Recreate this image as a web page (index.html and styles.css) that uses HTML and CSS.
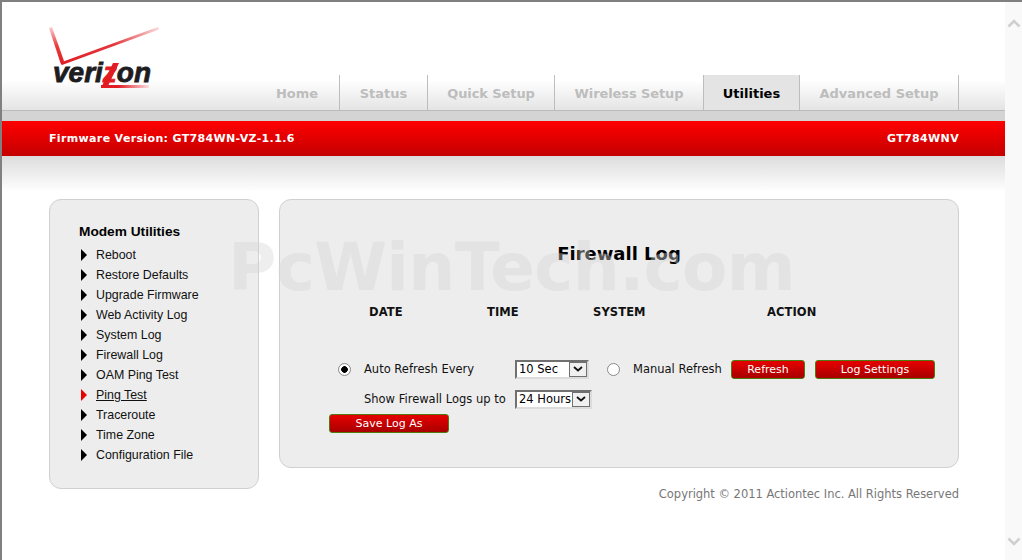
FILE: index.html
```html
<!DOCTYPE html>
<html lang="en">
<head>
    <meta charset="UTF-8">
    <title>Firewall Log</title>
    <link rel="stylesheet" href="styles.css">
</head>
<body>
<div id="wrap">
    <div id="main">
        <div id="head">
            <div class="logo">
                <svg width="112" height="70" viewBox="0 0 112 70">
                    <defs>
                        <linearGradient id="checkL" x1="0" y1="0" x2="0" y2="1">
                            <stop offset="0" stop-color="#f8d0d0"/>
                            <stop offset="0.5" stop-color="#ea3a3a"/>
                            <stop offset="1" stop-color="#e11c24"/>
                        </linearGradient>
                        <linearGradient id="checkR" x1="0" y1="0" x2="1" y2="0">
                            <stop offset="0" stop-color="#e11c24"/>
                            <stop offset="0.55" stop-color="#e4383e"/>
                            <stop offset="1" stop-color="#fadada"/>
                        </linearGradient>
                        <linearGradient id="bar" x1="0" y1="0" x2="1" y2="0">
                            <stop offset="0" stop-color="#e11c24"/>
                            <stop offset="0.35" stop-color="#e11c24"/>
                            <stop offset="1" stop-color="#fbdede"/>
                        </linearGradient>
                    </defs>
                    <polygon points="0,1 3,0 15,34 13,38 11.5,36" fill="url(#checkL)"/>
                    <polygon points="11.5,35.5 109,0 110,2.5 13,38" fill="url(#checkR)"/>
                    <text x="4" y="55" class="logo-text" textLength="98" lengthAdjust="spacingAndGlyphs">veri<tspan class="logo-z">z</tspan>on</text>
                    <polygon points="52,58 100,58 100,61 52,61" fill="url(#bar)"/>
                    <polygon points="52,61 58,61 70,36 64,36" fill="#e11c24"/>
                </svg>
            </div>
            <ul id="tabs">
                <li class="t1">Home</li>
                <li class="t2">Status</li>
                <li class="t3">Quick Setup</li>
                <li class="t4">Wireless Setup</li>
                <li class="t5 current">Utilities</li>
                <li class="t6">Advanced Setup</li>
            </ul>
        </div>
        <div id="redbar">
            <span>Firmware Version: GT784WN-VZ-1.1.6</span>
            <span>GT784WNV</span>
        </div>
        <div id="shade"></div>
        <div id="content">
            <div id="side">
                <h3>Modem Utilities</h3>
                <ul>
                    <li>Reboot</li>
                    <li>Restore Defaults</li>
                    <li>Upgrade Firmware</li>
                    <li>Web Activity Log</li>
                    <li>System Log</li>
                    <li>Firewall Log</li>
                    <li>OAM Ping Test</li>
                    <li class="on">Ping Test</li>
                    <li>Traceroute</li>
                    <li>Time Zone</li>
                    <li>Configuration File</li>
                </ul>
            </div>
            <div id="right">
                <div id="panel">
                    <h2>Firewall Log</h2>
                    <div class="cols">
                        <span>DATE</span>
                        <span>TIME</span>
                        <span>SYSTEM</span>
                        <span>ACTION</span>
                    </div>
                    <div class="row row1">
                        <input type="radio" name="mode" class="radio" checked>
                        <label class="lab1">Auto Refresh Every</label>
                        <div class="sel sel1">10 Sec<i><svg width="10" height="6" viewBox="0 0 10 6"><path d="M1 1 L5 4.5 L9 1" fill="none" stroke="#111" stroke-width="1.8"/></svg></i></div>
                        <input type="radio" name="mode" class="radio radio2">
                        <label class="lab2">Manual Refresh</label>
                        <button class="btn b1">Refresh</button>
                        <button class="btn b2">Log Settings</button>
                    </div>
                    <div class="row row2">
                        <label class="lab3">Show Firewall Logs up to</label>
                        <div class="sel sel2">24 Hours<i><svg width="10" height="6" viewBox="0 0 10 6"><path d="M1 1 L5 4.5 L9 1" fill="none" stroke="#111" stroke-width="1.8"/></svg></i></div>
                    </div>
                    <button class="btn b3">Save Log As</button>
                </div>
                <div id="copy">Copyright © 2011 Actiontec Inc. All Rights Reserved</div>
            </div>
        </div>
    </div>
    <div id="scroll">
        <svg width="14" height="9" viewBox="0 0 14 9"><path d="M1.5 7.5 L7 2 L12.5 7.5" fill="none" stroke="#cfcfcf" stroke-width="2.5"/></svg>
        <svg width="14" height="9" viewBox="0 0 14 9"><path d="M1.5 1.5 L7 7 L12.5 1.5" fill="none" stroke="#cfcfcf" stroke-width="2.5"/></svg>
    </div>
    <div id="mark">PcWinTech.com</div>
</div>
</body>
</html>
```

FILE: styles.css
```css
*{
    margin: 0px;
    padding: 0px;
    list-style: none;
    box-sizing: border-box;
}
body{
    background: white;
    overflow: hidden;
}
#wrap{
    width: 1022px;
    height: 560px;
    display: flex;
    position: relative;
    overflow: hidden;
    border-top: 2px solid #808080;
    border-left: 2px solid #808080;
}
#main{
    width: 1003px;
}
#scroll{
    width: 17px;
    background: #f9f9f9;
    display: flex;
    flex-direction: column;
    justify-content: space-between;
    align-items: center;
    padding: 17px 0 14px;
}

/* top */
#head{
    height: 109px;
    padding: 0 46px 0 47px;
    display: flex;
    justify-content: space-between;
    border-bottom: 1px solid #bbbbbb;
    background: linear-gradient(#ffffff 78px, #e4e4e4 108px);
}
.logo{
    padding-top: 25px;
    margin-right: 20px;
}
.logo-text{
    font-family: "Liberation Sans", sans-serif;
    font-weight: bold;
    font-style: italic;
    font-size: 27px;
    fill: #1d1d1f;
    stroke: #1d1d1f;
    stroke-width: 0.8px;
}
.logo-z{
    fill: #e11c24;
    stroke: #e11c24;
}
#tabs{
    display: flex;
    align-self: flex-end;
    height: 35px;
    font-family: "DejaVu Sans", sans-serif;
    font-size: 13px;
    font-weight: bold;
    color: #bdbdbd;
}
#tabs li{
    display: flex;
    align-items: center;
    justify-content: center;
    border-right: 1px solid #bdbdbd;
    padding-top: 2px;
}
#tabs .t1{ width: 91px; padding-left: 6px; }
#tabs .t2{ width: 88px; }
#tabs .t3{ width: 127px; letter-spacing: -0.1px; }
#tabs .t4{ width: 149px; letter-spacing: -0.1px; }
#tabs .t5{ width: 96px; }
#tabs .t6{ width: 159px; }
#tabs .current{
    background: #e4e4e4;
    color: #000;
}
#redbar{
    margin-top: 10px;
    height: 35px;
    padding: 0 46px 0 47px;
    display: flex;
    align-items: center;
    justify-content: space-between;
    background: linear-gradient(#ff0000, #c40000);
    color: white;
    font-family: "DejaVu Sans", sans-serif;
    font-size: 11px;
    font-weight: bold;
    letter-spacing: 0.35px;
}
#head + #redbar{
    box-shadow: 0 -10px 0 #d4d4d4;
}
#shade{
    height: 36px;
    margin-bottom: 7px;
    background: linear-gradient(#dcdcdc, #ffffff);
}

/* content */
#content{
    display: flex;
    padding-left: 47px;
    gap: 20px;
}
#side{
    width: 210px;
    height: 290px;
    background: #ededed;
    border: 1px solid #d0d0d0;
    border-radius: 12px;
    padding: 24px 0 0 29px;
    font-family: "Liberation Sans", sans-serif;
    font-size: 12.4px;
    color: #111;
}
#side h3{
    font-size: 13.7px;
    color: #000;
    line-height: 16px;
    margin-bottom: 5px;
}
#side li{
    height: 20px;
    line-height: 20px;
    padding-left: 17px;
    position: relative;
}
#side li:before{
    content: "";
    position: absolute;
    left: 2px;
    top: 4px;
    border-left: 6px solid #000;
    border-top: 6px solid transparent;
    border-bottom: 6px solid transparent;
}
#side .on{
    text-decoration: underline;
}
#side .on:before{
    border-left-color: #e80000;
}
#right{
    width: 680px;
}
#panel{
    height: 269px;
    background: #ededed;
    border: 1px solid #d0d0d0;
    border-radius: 12px;
    padding: 43px 0 0 49px;
    font-family: "DejaVu Sans", sans-serif;
    font-size: 11.5px;
    color: #111;
}
#panel h2{
    font-size: 18px;
    color: #000;
    text-align: center;
    line-height: 22px;
    margin-left: -49px;
}
.cols{
    margin: 40px 0 0 40px;
    display: grid;
    grid-template-columns: 118px 106px 174px auto;
    font-weight: bold;
    color: #111;
    line-height: 14px;
    letter-spacing: 0.1px;
}
.row{
    display: flex;
    align-items: center;
    height: 20px;
}
.row1{
    margin: 40px 0 0 9px;
}
.row2{
    margin: 10px 0 0 35px;
}
.radio{
    appearance: none;
    width: 13px;
    height: 13px;
    border: 1px solid #8a8a8a;
    border-radius: 50%;
    background: white;
    flex: none;
}
.radio:checked{
    background: radial-gradient(circle, #000 3px, white 3.6px);
}
.lab1{ margin-left: 13px; width: 151px; }
.lab2{ margin-left: 13px; width: 98px; }
.lab3{ width: 151px; }
.radio2{ margin-left: 18px; }
.sel{
    height: 19px;
    border: 2px solid #707070;
    border-right-color: #dcdcdc;
    border-bottom-color: #dcdcdc;
    background: white;
    display: flex;
    justify-content: space-between;
    align-items: center;
    padding-left: 2px;
    color: #000;
    font-size: 11.5px;
}
.sel i{
    width: 18px;
    height: 15px;
    border: 1px solid #707070;
    background: #f0f0f0;
    display: flex;
    align-items: center;
    justify-content: center;
}
.sel1{ width: 74px; }
.sel2{ width: 77px; }
.btn{
    height: 19px;
    background: linear-gradient(#e60000, #a80000);
    color: white;
    border: 1px solid #4f7a10;
    border-radius: 3px;
    font-family: "DejaVu Sans", sans-serif;
    font-size: 11px;
}
.b1{ width: 74px; }
.b2{ width: 120px; margin-left: 10px; }
.b3{ width: 120px; display: block; margin-top: 5px; }
#copy{
    margin-top: 19px;
    text-align: right;
    font-family: "DejaVu Sans", sans-serif;
    font-size: 11.5px;
    letter-spacing: -0.02px;
    color: #777;
}

/* watermark sits over the page */
#mark{
    position: absolute;
    left: 226px;
    top: 226px;
    font-family: "DejaVu Sans", sans-serif;
    font-weight: bold;
    font-size: 66px;
    line-height: 80px;
    letter-spacing: -0.65px;
    white-space: nowrap;
    color: rgba(212,212,212,0.4);
}
```
